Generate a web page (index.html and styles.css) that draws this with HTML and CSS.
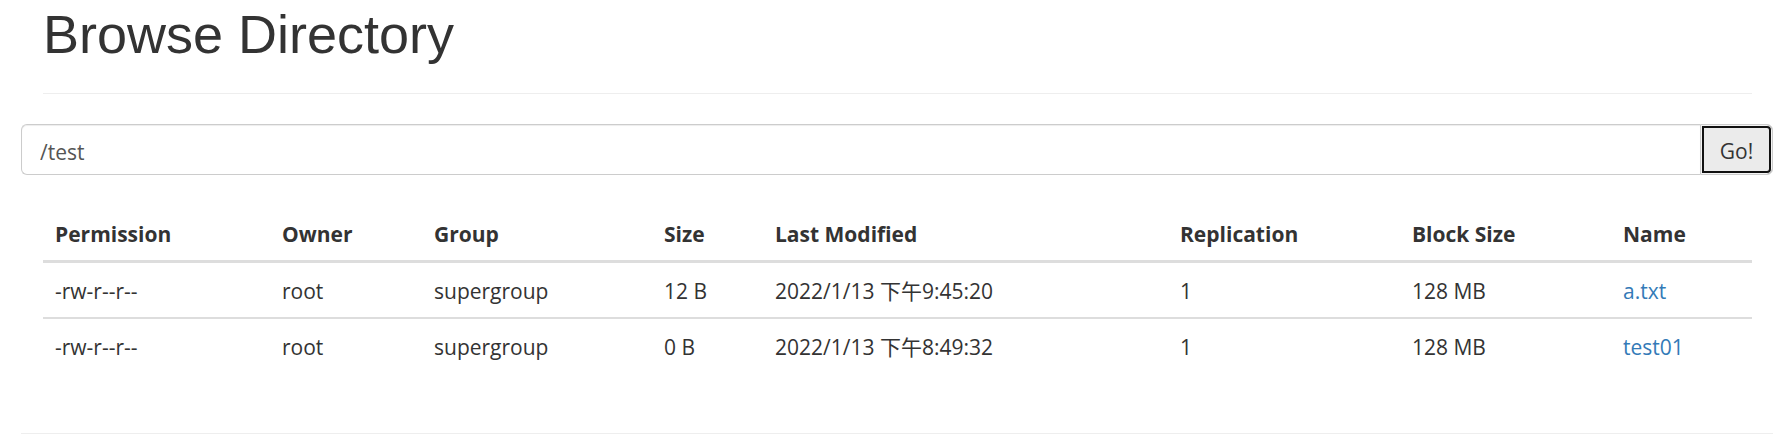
FILE: index.html
```html
<!DOCTYPE html>
<html lang="en">
<head>
<meta charset="utf-8">
<title>Browsing HDFS</title>
<link rel="stylesheet" href="styles.css">
</head>
<body>
<div class="container">
  <div class="page-header">
    <h1>Browse Directory</h1>
  </div>
  <div class="row">
    <form class="input-group">
      <input type="text" class="form-control" value="/test">
      <button class="btn" type="button">Go!</button>
    </form>
  </div>
  <table class="table">
    <colgroup>
      <col class="c-perm">
      <col class="c-owner">
      <col class="c-group">
      <col class="c-size">
      <col class="c-mod">
      <col class="c-rep">
      <col class="c-block">
      <col class="c-name">
    </colgroup>
    <thead>
      <tr>
        <th>Permission</th>
        <th>Owner</th>
        <th>Group</th>
        <th>Size</th>
        <th>Last Modified</th>
        <th>Replication</th>
        <th>Block Size</th>
        <th>Name</th>
      </tr>
    </thead>
    <tbody>
      <tr>
        <td>-rw-r--r--</td>
        <td>root</td>
        <td>supergroup</td>
        <td>12 B</td>
        <td>2022/1/13 下午9:45:20</td>
        <td>1</td>
        <td>128 MB</td>
        <td><a href="#">a.txt</a></td>
      </tr>
      <tr>
        <td>-rw-r--r--</td>
        <td>root</td>
        <td>supergroup</td>
        <td>0 B</td>
        <td>2022/1/13 下午8:49:32</td>
        <td>1</td>
        <td>128 MB</td>
        <td><a href="#">test01</a></td>
      </tr>
    </tbody>
  </table>
  <div class="row footer-row">
    <hr class="footer-rule">
  </div>
</div>
</body>
</html>
```

FILE: styles.css
```css
html, body {
  margin: 0;
  background: #fff;
}

body {
  font-family: "Open Sans", "Noto Sans CJK SC", sans-serif;
  font-size: 21px;
  line-height: 30px;
  color: #333;
}

.container {
  padding: 5px 30px 0 43px;
}

.page-header {
  padding-bottom: 14px;
  border-bottom: 1px solid #eee;
  margin-bottom: 30px;
}

.page-header h1 {
  margin: 0 0 15px;
  font-family: "Liberation Sans", Arial, sans-serif;
  font-weight: 400;
  font-size: 54px;
  line-height: 59.4px;
  color: #333;
}

.row {
  margin: 0 -21px 0 -22px;
}

.footer-row {
  display: flow-root;
}

.input-group {
  display: flex;
  margin: 0;
}

.form-control {
  flex: 1;
  min-width: 0;
  height: 51px;
  box-sizing: border-box;
  margin: 0;
  padding: 11px 18px 7px;
  border: 1px solid #ccc;
  border-right: 0;
  border-radius: 6px 0 0 6px;
  font-family: inherit;
  font-size: 21px;
  line-height: 30px;
  color: #555;
  background: #fff;
  box-shadow: inset 0 1px 1px rgba(0, 0, 0, 0.075);
  outline: none;
}

.btn {
  width: 73px;
  height: 51px;
  box-sizing: border-box;
  margin: 0;
  padding: 3px 0 0;
  border: 1px solid #ccc;
  border-radius: 0 6px 6px 0;
  background: #ebebeb;
  box-shadow: inset 0 0 0 1px #f4f4f4, inset 0 0 0 3px #111;
  font-family: inherit;
  font-size: 21px;
  line-height: 30px;
  color: #333;
}

.table {
  width: 100%;
  table-layout: fixed;
  border-collapse: collapse;
  border-spacing: 0;
  margin: 31px 0 30px;
}

.c-perm { width: 227px; }
.c-owner { width: 152px; }
.c-group { width: 230px; }
.c-size { width: 111px; }
.c-mod { width: 405px; }
.c-rep { width: 232px; }
.c-block { width: 211px; }
.c-name { width: 141px; }

.table th,
.table td {
  padding: 13px 12px 11px;
  text-align: left;
  vertical-align: top;
  line-height: 30px;
  white-space: nowrap;
}

.table th {
  font-weight: 700;
  border-bottom: 3px solid #ddd;
}

.table tbody tr + tr td {
  border-top: 2px solid #ddd;
}

.table a {
  color: #337ab7;
  text-decoration: none;
}

.footer-rule {
  margin: 30px 0 0;
  border: 0;
  border-top: 1px solid #eee;
  height: 0;
}
```
